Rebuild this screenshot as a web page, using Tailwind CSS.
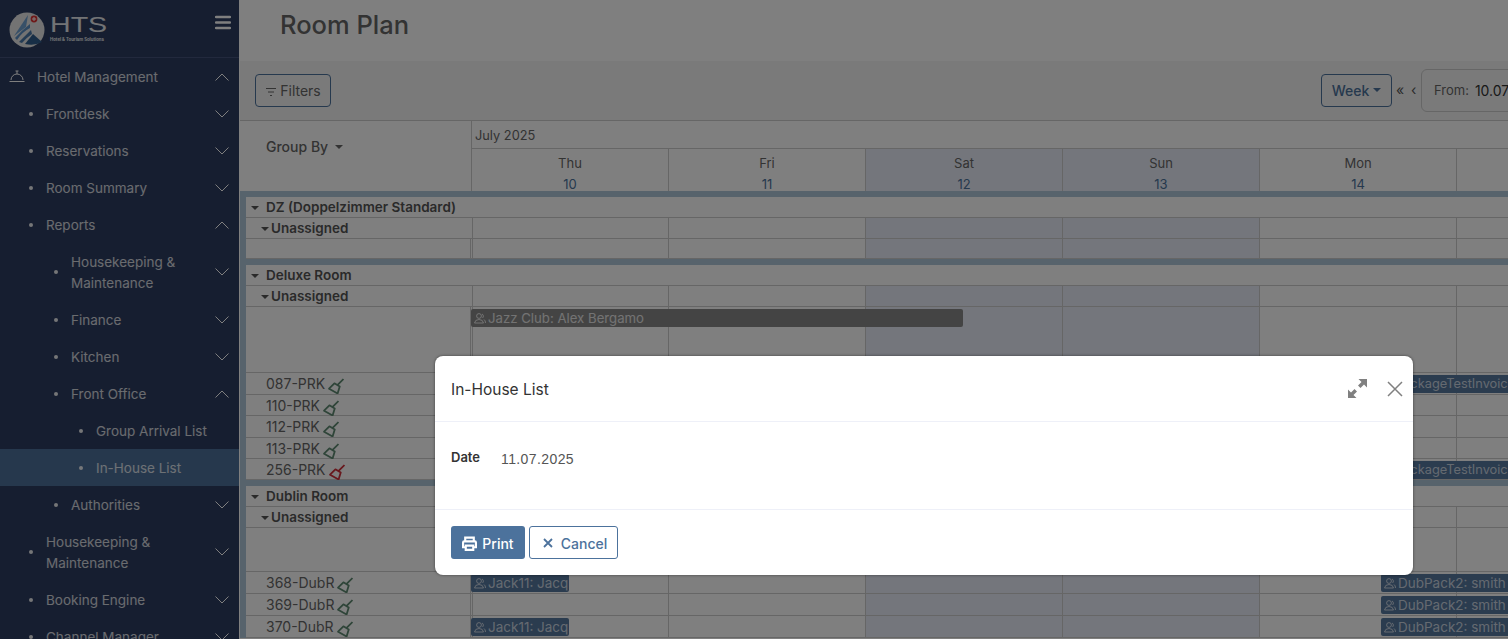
<!DOCTYPE html>
<html lang="en">
<head>
    <meta charset="UTF-8">
    <title>Room Plan - HTS</title>
    <script src="https://cdn.jsdelivr.net/npm/@tailwindcss/browser@4"></script>
</head>
<body class="font-['Inter',sans-serif] text-[13.5px] text-[#666]">
<div class="relative flex h-[639px] w-[1508px] overflow-hidden bg-white">

    <!-- sidebar -->
    <aside class="w-[240px] shrink-0 border-r border-white bg-[#2c3c60] text-white">
        <div class="flex h-[58px] border-b border-[#45527a] pl-[9px] pt-[12px]">
            <svg class="w-[36px] h-[36px] shrink-0" viewBox="0 0 36 36">
                <circle cx="18" cy="18" r="17.5" fill="#e6e6e6"/>
                <path d="M5 24 L19 3 L17 15 Z" fill="#6fa0d0"/>
                <path d="M6 26 Q12 19 21 12 L21 16 Q13 20 8 28 Z" fill="#5b8fc4"/>
                <path d="M10 30 Q16 24 22 18 L23 22 Q17 26 13 31 Z" fill="#4a78a8"/>
                <path d="M16 32 L24 22 L33 30 Q26 34 16 32 Z" fill="#2f5d8c"/>
                <circle cx="25" cy="7" r="3.4" fill="#d33"/>
                <path d="M25 5 V9 M23 7 H27" stroke="#fff" stroke-width="1"/>
            </svg>
            <div class="ml-[5px] flex flex-col w-[56px]">
                <span class="text-[22px] leading-[22px] mt-[2px] scale-x-[1.3] origin-left font-['Liberation_Sans',sans-serif] text-[#e4e7eb]">HTS</span>
                <span class="text-[4.3px] leading-[5px] mt-[1px] whitespace-nowrap font-bold text-[#e4e7eb]">Hotel &amp; Tourism Solutions</span>
            </div>
            <svg class="ml-[110px] mt-[3px] w-[16px] h-[15px] shrink-0 -translate-x-[1px]" viewBox="0 0 16 15" fill="none" stroke="#fff" stroke-width="2.4" stroke-linecap="round">
                <path d="M1 2 H15 M1 7.5 H15 M1 13 H15"/>
            </svg>
        </div>
        <nav id="nav"></nav>
    </aside>

    <!-- main -->
    <main class="flex-1 min-w-0 overflow-hidden">
        <div class="h-[61px] pl-[40px] pt-[8px] text-[25.5px] leading-[34px] font-medium text-[#666]">Room Plan</div>

        <div class="relative h-[60px] border-b border-[#ccc] bg-[#f5f5f5]">
            <button class="absolute left-[15px] top-[13px] flex h-[33px] w-[76px] items-center justify-center gap-[3px] rounded-[4px] border border-[#4c729c] text-[14px] text-[#666]">
                <svg class="w-[12px] h-[10px] mt-[3px]" viewBox="0 0 12 10" fill="none" stroke="#666" stroke-width="1"><path d="M1 1.5 H11 M3 5 H9 M5 8.5 H7"/></svg>
                Filters
            </button>
            <button class="absolute left-[1081px] top-[13px] flex h-[33px] w-[71px] items-center justify-center gap-[4px] rounded-[4px] border border-[#4c729c] text-[14px] font-medium text-[#4c729c]">
                Week
                <span class="mb-[2px] border-x-[4px] border-t-[4px] border-x-transparent border-t-[#4c729c]"></span>
            </button>
            <span class="absolute left-[1156px] top-[20px] text-[14px] leading-[18px] text-[#555]">«</span>
            <span class="absolute left-[1171px] top-[20px] text-[14px] leading-[18px] text-[#555]">‹</span>
            <div class="absolute left-[1181px] top-[8px] flex h-[43px] w-[200px] items-center gap-[6px] rounded-[6px] border border-[#ccc] bg-[#f5f5f5] pl-[12px]">
                <span class="text-[13px] text-[#666]">From:</span>
                <span class="text-[14px] text-[#333]">10.07.2025</span>
            </div>
        </div>

        <!-- room plan grid -->
        <div class="flex h-[70px]">
            <div class="w-[231px] shrink-0 pl-[26px] pt-[16px] text-[14px] leading-[20px] font-medium">
                Group By
                <span class="ml-[3px] inline-block mb-[3px] border-x-[4px] border-t-[4px] border-x-transparent border-t-[#666]"></span>
            </div>
            <div class="flex-1 border-l border-[#ccc]">
                <div class="h-[28px] border-b border-[#ccc] pl-[3px] pt-[5px] text-[12.8px] leading-[20px]">July 2025</div>
                <div id="days" class="-ml-px flex h-[42px]"></div>
            </div>
        </div>
        <div id="rows" class="bg-[#aec6d8] pl-[6px] pt-[6px]"></div>
    </main>

    <!-- backdrop -->
    <div class="absolute inset-0 bg-black/50"></div>

    <!-- In-House List modal -->
    <div class="absolute left-[435px] top-[356px] h-[219px] w-[978px] rounded-[8px] bg-white shadow-[0_0_3px_rgba(0,0,0,0.5)]">
        <div class="flex h-[66px] items-center border-b border-[#eef0f8] pl-[16px]">
            <h5 class="flex-1 pt-[3px] text-[15.5px] text-[#333]">In-House List</h5>
            <svg class="mr-[20px] w-[19px] h-[19px]" viewBox="0 0 19 19" fill="#808080">
                <path d="M10.5 0 H19 V8.5 L16 5.5 L12.5 9 L10 6.5 L13.5 3 Z M8.5 19 H0 V10.5 L3 13.5 L6.5 10 L9 12.5 L5.5 16 Z"/>
            </svg>
            <svg class="mr-[10px] w-[16px] h-[16px]" viewBox="0 0 16 16" fill="none" stroke="#808080" stroke-width="1.5"><path d="M1 1 L15 15 M15 1 L1 15"/></svg>
        </div>
        <div class="flex h-[88px] border-b border-[#eef0f8] pl-[16px] pt-[26px] text-[13px]">
            <span class="w-[50px] font-semibold text-[#333]">Date</span>
            <span class="pt-[1px] font-['Liberation_Sans',sans-serif] text-[14px] tracking-[0.4px] text-[#555]">11.07.2025</span>
        </div>
        <div class="flex gap-[4px] pl-[16px] pt-[16px]">
            <button class="flex h-[33px] w-[74px] items-center justify-center gap-[5px] rounded-[3px] bg-[#4c729c] pt-[1px] text-[14px] font-medium text-white">
                <svg class="w-[15px] h-[15px]" viewBox="0 0 14 14" fill="none" stroke="#fff" stroke-width="2"><path d="M3 5 V1.5 H11 V5"/><path d="M3 10.5 H1 V6 Q1 5 2 5 H12 Q13 5 13 6 V10.5 H11"/><path d="M3.5 9 H10.5 V13 H3.5 Z"/></svg>
                Print
            </button>
            <button class="flex h-[33px] w-[89px] items-center justify-center gap-[8px] rounded-[3px] border border-[#4c729c] pl-[3px] pt-[1px] text-[14px] font-medium text-[#4c729c]">
                <svg class="w-[10px] h-[10px]" viewBox="0 0 10 10" fill="none" stroke="#4c729c" stroke-width="1.8"><path d="M1 1 L9 9 M9 1 L1 9"/></svg>
                Cancel
            </button>
        </div>
    </div>
</div>

<script>
    // Sidebar menu: label, indent, open
    const chevron = open => `<svg class="absolute right-[10px] top-1/2 -mt-[4px] w-[14px] h-[8px]" viewBox="0 0 14 8" fill="none" stroke="#fff" stroke-width="1"><path d="${open ? 'M0.5 7.5 L7 1 L13.5 7.5' : 'M0.5 0.5 L7 7 L13.5 0.5'}"/></svg>`;
    const menu = [
        ['Hotel Management', 0, true], ['Frontdesk', 1, false], ['Reservations', 1, false], ['Room Summary', 1, false],
        ['Reports', 1, true], ['Housekeeping &amp;<br>Maintenance', 2, false], ['Finance', 2, false], ['Kitchen', 2, false],
        ['Front Office', 2, true], ['Group Arrival List', 3, null], ['In-House List', 3, null, true], ['Authorities', 2, false],
        ['Housekeeping &amp;<br>Maintenance', 1, false], ['Booking Engine', 1, false], ['Channel Manager', 1, false]
    ];
    const nav = document.getElementById('nav');
    menu.forEach(([label, level, open, active]) => {
        const pad = [37, 46, 71, 96][level];
        const item = document.createElement('div');
        item.className = 'relative flex items-center leading-[21px] py-[8px] text-white/80' + (active ? ' bg-[#4c709a]' : '');
        item.style.paddingLeft = pad + 'px';
        const mark = level === 0
            ? `<svg class="absolute left-[9px] top-[10px] w-[16px] h-[15px]" viewBox="0 0 16 15" fill="none" stroke="#fff" stroke-width="1"><path d="M2 12 A6 6 0 0 1 14 12 M8 6 V3 M6.5 3 H9.5 M0.5 13.5 H15.5"/></svg>`
            : `<span class="absolute top-1/2 -mt-[2px] h-[4px] w-[4px] rounded-full bg-white/90" style="left:${pad - 17}px"></span>`;
        item.innerHTML = mark + `<span class="relative top-px">${label}</span>` + (open === null ? '' : chevron(open));
        nav.appendChild(item);
    });

    // Day header
    const days = [['Thu', 10], ['Fri', 11], ['Sat', 12], ['Sun', 13], ['Mon', 14], ['Tue', 15]];
    document.getElementById('days').innerHTML = days.map(([d, n], i) =>
        `<div class="w-[197px] shrink-0 text-center text-[13px] leading-[21px] pt-[4px] border-l border-[#ccc] ${i === 2 || i === 3 ? 'bg-[#e8edf8]' : ''}">${d}<div class="text-[#4c729c]">${n}</div></div>`
    ).join('');

    // Rows of the grid
    const eventIcon = `<svg class="w-[12px] h-[11px] shrink-0 mr-[2px]" viewBox="0 0 12 11" fill="none" stroke="currentColor" stroke-width="1"><circle cx="5" cy="3" r="2.4"/><path d="M0.5 10 Q1 6.5 5 6.5 Q9 6.5 9.5 10 Z M8 1 A2.4 2.4 0 0 1 8.5 5 M10 6.5 Q11.5 7.5 11.5 10"/></svg>`;
    const blue = 'bg-[#56789f] text-white/70';
    const ev = (left, w, text, cls = blue) =>
        `<div class="absolute top-[2px] flex h-[18px] items-center overflow-hidden whitespace-nowrap rounded-[2px] pl-[3px] ${cls}" style="left:${left}px;width:${w}px">${eventIcon}${text}</div>`;
    const cells = `<div class="ml-px flex">` + days.map((d, i) =>
        `<div class="${i ? 'w-[197px]' : 'w-[196px]'} shrink-0 border-l border-[#ccc] ${i === 2 || i === 3 ? 'bg-[#e8edf8]' : ''}"></div>`).join('') + `</div>`;
    const caret = 'inline-block mb-[2px] border-x-[4px] border-t-[4px] border-x-transparent border-t-[#555]';
    const broom = c => `<svg class="inline-block ml-[3px] -mb-[1px] w-[16px] h-[16px]" viewBox="0 0 15 15" fill="none" stroke="${c}" stroke-width="1.7" stroke-linejoin="round"><path d="M1 10 L6 5 L11 8 L9 14.5 Z M9 6.5 L14.5 1"/></svg>`;
    const divider = '<span class="absolute left-[224px] top-0 bottom-0 w-px bg-[#ccc]"></span>';

    const group = name => `<div class="h-[21px] border-b border-[#ccc] bg-white pl-[5px] leading-[20px] font-semibold text-[#555]"><span class="${caret} mr-[7px]"></span>${name}</div>`;
    const row = (h, label, events = '', extra = '') =>
        `<div class="relative flex bg-white border-b border-[#ccc]" style="height:${h}px"><div class="w-[225px] shrink-0 ${extra}">${label}</div>${cells}${events}</div>`;
    const unassigned = row(21, `<span class="${caret} ml-[15px] mr-[2px]"></span>Unassigned`, '', 'font-semibold text-[#555] leading-[20px]');
    const room = (h, name, color, events = '') => row(h, `${name}${broom(color)}`, divider + events, 'pl-[20px] text-[14px] leading-[21px]');
    const spacer = '<div class="h-[6px]"></div>';
    const green = '#5f8a72', red = '#d0303a';
    const jazz = 'bg-[#888] pt-px text-[13.2px] text-white/80';
    const invoice = 'bg-[#56789f] text-[12.8px] text-white/70';

    document.getElementById('rows').innerHTML = [
        group('DZ (Doppelzimmer Standard)'), unassigned, row(20, '', divider), spacer,
        group('Deluxe Room'), unassigned, row(66, '', divider + ev(225, 492, 'Jazz Club: Alex Bergamo', jazz)),
        room(22, '087-PRK', green, ev(1132, 200, 'PackageTestInvoice', invoice)),
        room(21, '110-PRK', green), room(22, '112-PRK', green), room(21, '113-PRK', green),
        room(21, '256-PRK', red, ev(1132, 200, 'PackageTestInvoice', invoice)), spacer,
        group('Dublin Room'), unassigned, row(44, '', divider),
        room(22, '368-DubR', green, ev(225, 98, 'Jack11: Jacqueline') + ev(1135, 200, 'DubPack2: smith')),
        room(22, '369-DubR', green, ev(1135, 200, 'DubPack2: smith')),
        room(22, '370-DubR', green, ev(225, 98, 'Jack11: Jacqueline') + ev(1135, 200, 'DubPack2: smith'))
    ].join('');
</script>
</body>
</html>
